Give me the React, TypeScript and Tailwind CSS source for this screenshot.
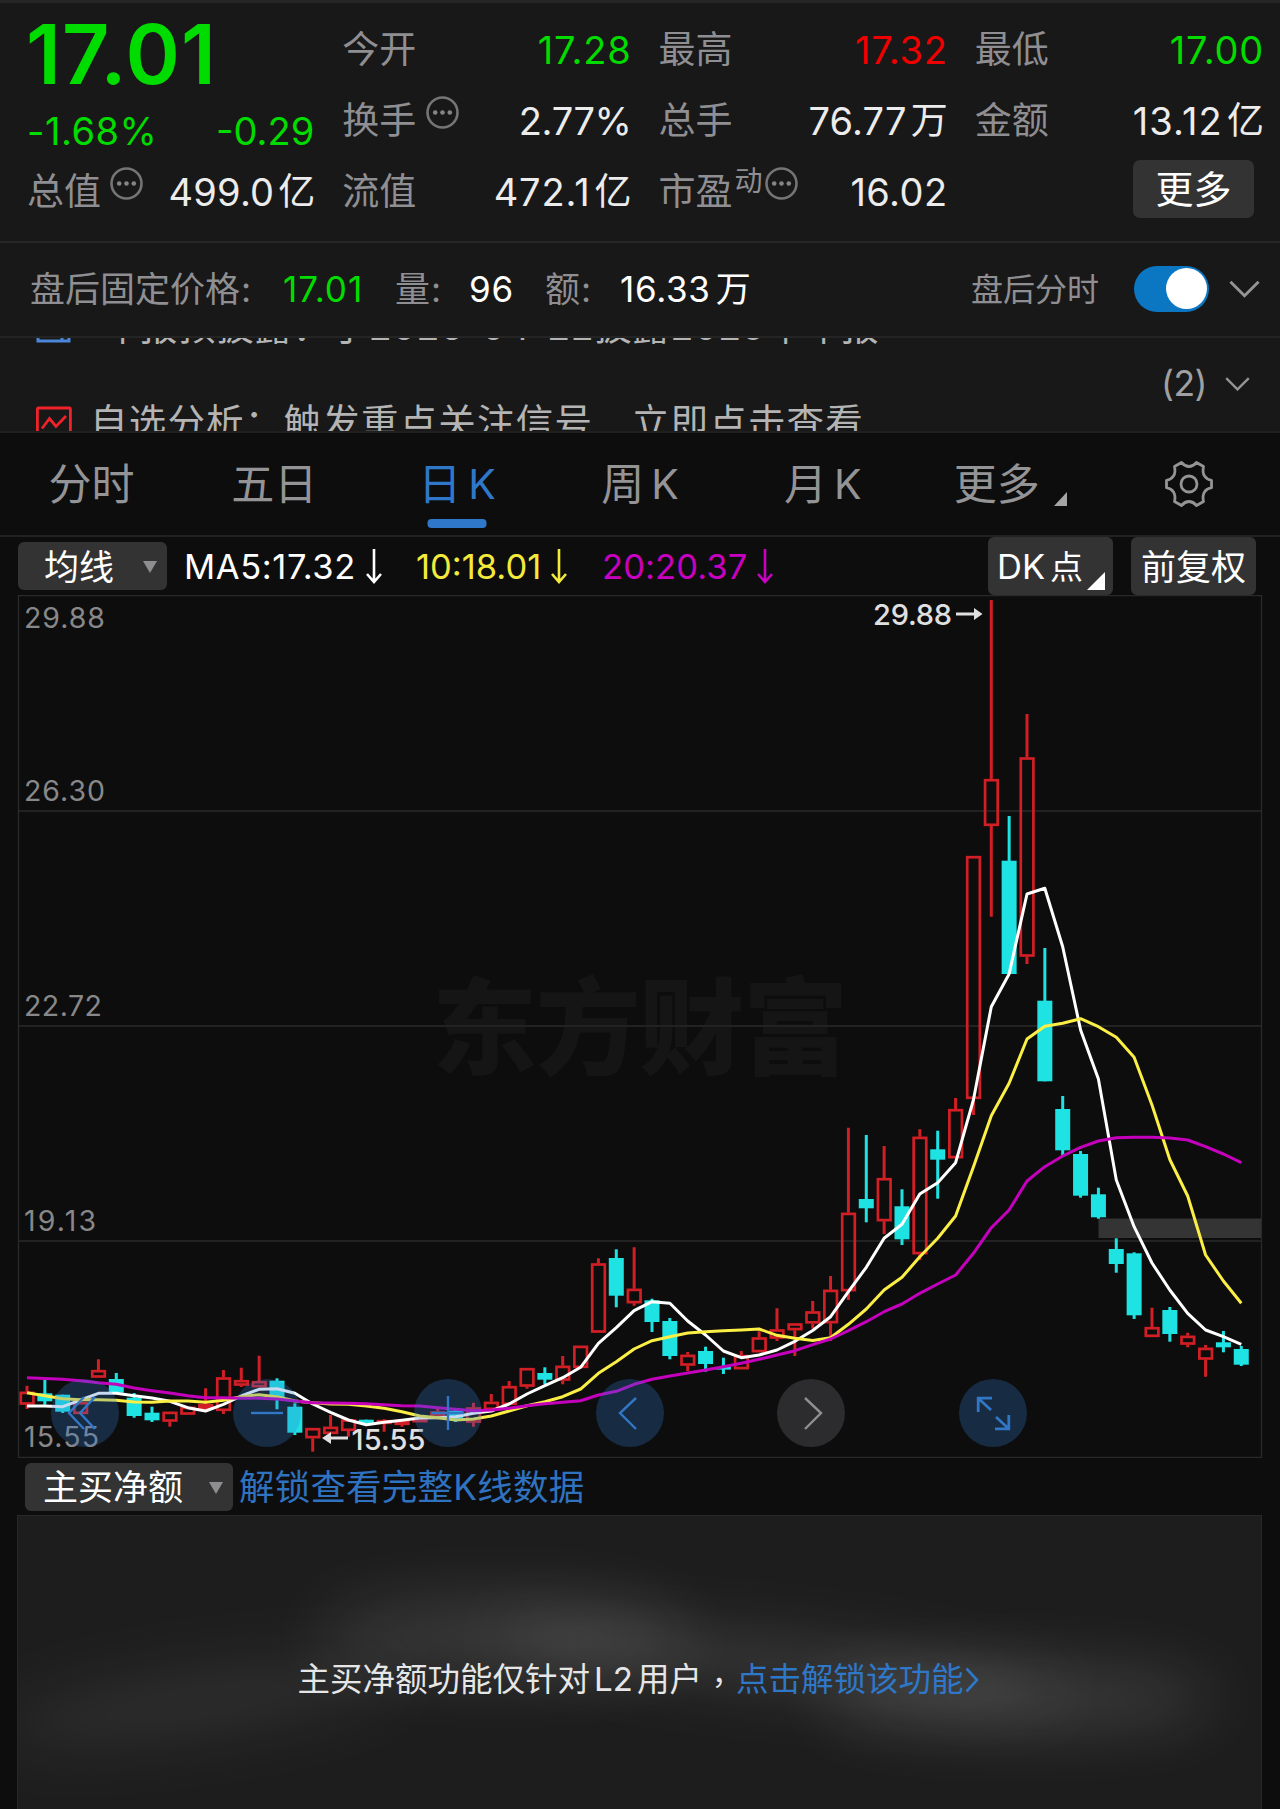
import type { ReactNode } from "react";

/* ---------- chart data (pixel space of the chart, origin at the page's left edge) ---------- */

type Candle = ["r" | "c", number, number, number, number]; // colour, high, body top, body bottom, low

const CANDLES: Candle[] = [
  ["r", 1385.7, 1391.7, 1404.7, 1409], ["c", 1380, 1393.3, 1401.3, 1404.7], ["c", 1394.7, 1394.7, 1411.7, 1413],
  ["r", 1401, 1402, 1414, 1414], ["r", 1359.3, 1370, 1377.7, 1377.7], ["c", 1373, 1379, 1392.7, 1392.7],
  ["c", 1393, 1397.7, 1416, 1417.7], ["c", 1406.7, 1412.7, 1420.3, 1422], ["r", 1411.7, 1411.7, 1421.7, 1426.7],
  ["r", 1406.7, 1406.7, 1414.7, 1414.7], ["r", 1388.3, 1404, 1409, 1410], ["r", 1370, 1377.3, 1411, 1414],
  ["r", 1367.7, 1380, 1385.7, 1387], ["r", 1355.7, 1381, 1387.3, 1387.3], ["c", 1378.3, 1380.7, 1398.3, 1409.3],
  ["c", 1403.3, 1406.7, 1432.7, 1435], ["r", 1428, 1428, 1438.3, 1451.7], ["r", 1415, 1426.7, 1434, 1434],
  ["r", 1419.3, 1419.3, 1431, 1436.7], ["c", 1419.7, 1419.7, 1423, 1423], ["r", 1419.3, 1420, 1424, 1431.7],
  ["r", 1419, 1420, 1425, 1426.7], ["r", 1418, 1418, 1422.3, 1422.3], ["r", 1409, 1411.3, 1416.3, 1416.3],
  ["c", 1408, 1410.7, 1420, 1422], ["r", 1402.7, 1407.3, 1422.7, 1426.7], ["r", 1394, 1401.7, 1410, 1410],
  ["r", 1381, 1386, 1405, 1405], ["r", 1368, 1368, 1386.7, 1388.7], ["c", 1367.3, 1373, 1379.7, 1384.3],
  ["r", 1356, 1365.7, 1380.7, 1384.3], ["r", 1345.7, 1345.7, 1368, 1368], ["r", 1258.3, 1263.3, 1332.7, 1332.7],
  ["c", 1249.3, 1258, 1295.7, 1307.3], ["r", 1247.3, 1288.7, 1303.3, 1305.7], ["c", 1298.7, 1300.3, 1322, 1332],
  ["c", 1318, 1321, 1356, 1359.3], ["r", 1352, 1354.7, 1365.7, 1371], ["c", 1346.7, 1351, 1364, 1371.7],
  ["c", 1357.7, 1367, 1369.6, 1374], ["r", 1351, 1355, 1369.3, 1369.3], ["r", 1331.3, 1337.3, 1352.3, 1352.3],
  ["r", 1308.3, 1329.3, 1338.7, 1341], ["r", 1323.3, 1323.3, 1330.3, 1356], ["r", 1301, 1311.3, 1323.5, 1328.5],
  ["r", 1276, 1289.7, 1323.3, 1341], ["r", 1127.7, 1212.7, 1291.3, 1300], ["c", 1135, 1199, 1208.3, 1222.3],
  ["r", 1146, 1178, 1221.3, 1234], ["c", 1189.3, 1206.3, 1239.3, 1245], ["r", 1129.3, 1136.7, 1254.3, 1260],
  ["c", 1130.7, 1149.3, 1159.7, 1198.7], ["r", 1098, 1109, 1158.3, 1158.3], ["r", 856, 856, 1099, 1115],
  ["r", 600, 779, 826, 916.7], ["c", 816, 860.7, 974, 974], ["r", 714, 757.3, 956.7, 964],
  ["c", 948, 1000.7, 1081.3, 1081.3], ["c", 1096, 1109, 1150.3, 1156], ["c", 1151, 1154, 1195.7, 1197.7],
  ["c", 1187.7, 1194.3, 1217.3, 1218.7], ["c", 1238.3, 1249, 1264, 1272.7], ["c", 1252.3, 1253.3, 1315.3, 1319],
  ["r", 1307.7, 1327, 1337, 1337], ["c", 1307, 1310, 1334, 1341.7], ["r", 1332.7, 1335.7, 1344.7, 1347.3],
  ["r", 1345, 1347.7, 1359.7, 1376.7], ["c", 1331, 1342.3, 1347.3, 1352.3], ["c", 1346, 1349, 1364.7, 1366],
];

const MA5 = [
  1406, 1406, 1406.7, 1400, 1393.3, 1393.3, 1395.7, 1398, 1401.3, 1407.7, 1411, 1404.3, 1396, 1389.3, 1388.7, 1393.3,
  1404, 1412.3, 1420, 1424.7, 1422.3, 1420.3, 1418, 1417.7, 1416.7, 1413.3, 1411, 1404, 1394, 1385.7, 1377.7, 1367.3,
  1343.3, 1327.7, 1310.7, 1301.7, 1303.3, 1321, 1335, 1351, 1357.7, 1355, 1350, 1341.3, 1330.5, 1316.7, 1291.7,
  1267.3, 1238.3, 1224.3, 1194, 1182.7, 1162.7, 1100, 1006.7, 974, 894, 888.3, 946.7, 1030, 1079, 1180, 1226.7, 1263,
  1290, 1313.3, 1330, 1336.7, 1344.3,
];

const MA10 = [
  1392.7, 1395.7, 1398.7, 1399.7, 1399.7, 1400.3, 1402, 1402.3, 1401, 1401, 1402.3, 1400.3, 1396.7, 1394.7, 1396.7,
  1401, 1402.7, 1404, 1404.3, 1406, 1408.3, 1411.7, 1416, 1417.7, 1420, 1419, 1416, 1411, 1405.7, 1401.7, 1396.7, 1389,
  1373.3, 1361.7, 1349, 1340.7, 1336.7, 1333, 1331.7, 1330.7, 1330, 1329, 1335.3, 1338.3, 1340.5, 1337.7, 1324.3, 1309,
  1290, 1277.3, 1256.7, 1238.3, 1216, 1167, 1115.7, 1083.3, 1039, 1026.3, 1023.3, 1018.7, 1026.7, 1037.3, 1057.3,
  1105, 1159.5, 1196, 1255, 1281, 1303.3,
];

const MA20 = [
  1377.7, 1378.5, 1379.3, 1380.7, 1382.7, 1384.3, 1388, 1390.7, 1393, 1395.7, 1397.7, 1397.7, 1398.3, 1398.3, 1399,
  1401, 1402.7, 1403, 1403.3, 1403.7, 1404.7, 1405.7, 1406, 1407.7, 1409.3, 1410.7, 1410, 1408.3, 1405.7, 1403.7,
  1402.3, 1400.7, 1395, 1391.3, 1384.3, 1379.3, 1376, 1373, 1370, 1366.7, 1363.3, 1359.3, 1355, 1350.7, 1344.7, 1339,
  1330.7, 1321.7, 1311.7, 1304, 1293.3, 1284, 1275, 1253.3, 1227.7, 1210, 1181, 1166.7, 1156, 1147.3, 1141, 1137.7,
  1137.3, 1137.3, 1138, 1140, 1146.7, 1154, 1162.7,
];

const cx = (i: number) => 27 + i * 17.857;
const line = (ys: number[]) => ys.map((y, i) => `${cx(i).toFixed(1)},${y}`).join(" ");

/* ---------- small pieces ---------- */

function MoreDots({ className = "" }: { className?: string }) {
  return (
    <svg className={`size-[33px] shrink-0 ${className}`} viewBox="0 0 33 33" fill="none">
      <circle cx="16.5" cy="16.5" r="15" stroke="#757577" strokeWidth="2.6" />
      <circle cx="9.2" cy="16.5" r="2.3" fill="#858587" />
      <circle cx="16.5" cy="16.5" r="2.3" fill="#858587" />
      <circle cx="23.8" cy="16.5" r="2.3" fill="#858587" />
    </svg>
  );
}

function Chevron({ className }: { className: string }) {
  return (
    <svg className={className} viewBox="0 0 32 18" fill="none">
      <path d="M1.5 1.5 16 16 30.5 1.5" stroke="#949496" strokeWidth="3" />
    </svg>
  );
}

type StatProps = { label: ReactNode; value?: ReactNode; color?: string; tracking?: string };

function Stat({ label, value, color = "text-[#ececec]", tracking = "tracking-[0.2px]" }: StatProps) {
  return (
    <div className="-mr-[2px] -ml-px flex h-[71px] items-center justify-between">
      <span className="flex items-center text-[37px] text-[#8f8f93]">{label}</span>
      <span className={`flex items-center text-[38px] ${tracking} ${color}`}>{value}</span>
    </div>
  );
}

function Unit({ children }: { children: ReactNode }) {
  return <span className="ml-[4px] text-[37px] tracking-normal">{children}</span>;
}

function Header() {
  return (
    <section className="grid h-[241px] grid-cols-4 gap-x-[30px] border-t-[3px] border-[#252525] bg-[#181818] pr-[18px] pl-[27px]">
      <div className="pt-[11px]">
        <div className="-ml-px flex h-[80px] items-center text-[82.5px] font-semibold tracking-[1.1px] text-[#00dc00]">17.01</div>
        <div className="-mr-px flex h-[74px] items-center justify-between text-[38px] text-[#00dc00]">
          <span className="tracking-[0.5px]">-1.68%</span>
          <span>-0.29</span>
        </div>
        <div className="-mt-[12px] ml-px">
          <Stat label={<>总值<MoreDots className="mb-[16px] ml-[9px]" /></>} value={<>499.0<Unit>亿</Unit></>} />
        </div>
      </div>
      <div className="pt-[11px]">
        <Stat label="今开" value="17.28" color="text-[#00dc00]" tracking="tracking-[0.8px]" />
        <Stat label={<>换手<MoreDots className="mb-[16px] ml-[10px]" /></>} value="2.77%" tracking="tracking-[-0.4px]" />
        <Stat label="流值" value={<>472.1<Unit>亿</Unit></>} tracking="tracking-[0.9px]" />
      </div>
      <div className="pt-[11px]">
        <Stat label="最高" value="17.32" color="text-[#ee0000]" tracking="tracking-[0.8px]" />
        <Stat label="总手" value={<>76.77<Unit>万</Unit></>} />
        <Stat
          label={<>市盈<span className="mb-[22px] ml-[2px] text-[28px]">动</span><MoreDots className="mb-[16px] ml-[2px]" /></>}
          value="16.02"
          tracking="tracking-[0.5px]"
        />
      </div>
      <div className="pt-[11px]">
        <Stat label="最低" value="17.00" color="text-[#00dc00]" tracking="tracking-[0.8px]" />
        <Stat label="金额" value={<>13.12<Unit>亿</Unit></>} tracking="tracking-[1.2px]" />
        <div className="mt-[4px] mr-[8px] ml-auto flex h-[58px] w-[121px] items-center justify-center rounded-[7px] bg-[#333333] text-[38px] text-white">
          更多
        </div>
      </div>
    </section>
  );
}

function AfterHours() {
  return (
    <section className="flex h-[95px] items-center border-t-2 border-[#262626] bg-[#181818] pl-[30px] text-[35px] text-white">
      <span className="w-[253px] text-[#8f8f93]">盘后固定价格<span className="ml-px">:</span></span>
      <span className="w-[112px] tracking-[1px] text-[#00dc00]">17.01</span>
      <span className="w-[74px] text-[#8f8f93]">量<span className="ml-px">:</span></span>
      <span className="w-[76px] tracking-[0.9px]">96</span>
      <span className="w-[75px] text-[#8f8f93]">额<span className="ml-px">:</span></span>
      <span className="tracking-[0.7px]">16.33<span className="ml-[5px]">万</span></span>
      <span className="ml-auto text-[32px] text-[#8f8f93]">盘后分时</span>
      <span className="mb-[2px] ml-[35px] flex h-[46px] w-[75px] items-center justify-end rounded-full bg-[#0b77c3] pr-[2px]">
        <span className="size-[41px] rounded-full bg-white" />
      </span>
      <Chevron className="mr-[20px] mb-[2px] ml-[20px] h-[18px] w-[31px]" />
    </section>
  );
}

function NewsTicker() {
  return (
    <section className="flex h-[95px] items-center justify-between overflow-hidden border-t-2 border-[#242424] bg-[#181818] pr-[30px] pl-[36px]">
      <div className="-mt-[22px] text-[37.5px] whitespace-pre text-[#b4b4b4]">
        <div className="flex h-[96px] items-center">
          <svg className="mt-[3px] mr-[30px] h-[34px] w-[36px]" viewBox="0 0 36 34" fill="none" stroke="#4c86d8" strokeWidth="3">
            <rect x="2" y="2" width="31" height="29" />
            <path d="M8 24h18M26 20v10" />
          </svg>
          <span className="mt-[3px] tracking-[0.6px]">年报预披露：于2026-04-22披露2025年年报</span>
        </div>
        <div className="flex h-[96px] items-center">
          <svg className="mt-[2px] mr-[18px] h-[36px] w-[36px]" viewBox="0 0 36 36" fill="none" stroke="#f0222a" strokeWidth="2.8">
            <rect x="1.4" y="3" width="33" height="31" rx="1" />
            <path d="M6 23.500 13.500 13.500 20 21.500 30 11" />
          </svg>
          <span className="mt-[2px] tracking-[1.2px]">自选分析：触发重点关注信号　立即点击查看</span>
        </div>
      </div>
      <div className="mb-[2px] flex items-center text-[#a0a0a2]">
        <span className="text-[35.5px] tracking-[-0.5px]">(2)</span>
        <Chevron className="ml-[18px] h-[14px] w-[25px]" />
      </div>
    </section>
  );
}

function GearIcon() {
  return (
    <svg className="h-[48px] w-[50px]" viewBox="0 0 50 48" fill="none" stroke="#949496" strokeWidth="2.8" strokeLinejoin="round">
      <path d="M17.500 2.500Q21 6.500 25 6.500T32.500 2.500L39.500 6.500Q38.200 12.500 40.500 16T47.500 20.300V27.700Q42.800 28.500 40.500 32T39.500 41.500L32.500 45.500Q29 41.500 25 41.500T17.500 45.500L10.500 41.500Q11.800 35.500 9.500 32T2.500 27.700V20.300Q7.200 19.500 9.500 16T10.500 6.500Z" />
      <circle cx="25" cy="24" r="8" />
    </svg>
  );
}

function Tab({ children, active = false }: { children: ReactNode; active?: boolean }) {
  return (
    <div className={`relative flex items-center justify-center text-[43px] ${active ? "text-[#2f77c8]" : "text-[#949496]"}`}>
      {children}
      {active && <span className="absolute bottom-[7px] left-1/2 h-[9px] w-[59px] -translate-x-1/2 rounded-[4px] bg-[#2f77c8]" />}
    </div>
  );
}

function Latin({ children }: { children: ReactNode }) {
  return <span className="ml-[7px] text-[41px]">{children}</span>;
}

function Tabs() {
  return (
    <nav className="grid h-[104px] grid-cols-7 border-t-2 border-[#1f1f1f]">
      <Tab>分时</Tab>
      <Tab>五日</Tab>
      <Tab active>日<Latin>K</Latin></Tab>
      <Tab>周<Latin>K</Latin></Tab>
      <Tab>月<Latin>K</Latin></Tab>
      <Tab>
        <span className="ml-[9px]">更多</span>
        <svg className="mt-[30px] ml-[14px] h-[14px] w-[13px]" viewBox="0 0 13 14"><path d="M13 0V14H0Z" fill="#a5a5a5" /></svg>
      </Tab>
      <Tab><GearIcon /></Tab>
    </nav>
  );
}

function Dropdown({ className, children }: { className: string; children: ReactNode }) {
  return (
    <div className={`flex items-center justify-between rounded-[6px] bg-[#333333] pr-[10px] text-white ${className}`}>
      {children}
      <svg className="h-[12px] w-[14px]" viewBox="0 0 14 12"><path d="M0 0H14L7 12Z" fill="#8e8e90" /></svg>
    </div>
  );
}

function Average({ className, children }: { className: string; children: ReactNode }) {
  return (
    <span className={`flex items-center pt-[2px] text-[34.5px] ${className}`}>
      {children}
      <svg className="-mt-[2px] ml-[10px] h-[36px] w-[16px]" viewBox="0 0 16 36" fill="none" stroke="currentColor" strokeWidth="2.6">
        <path d="M8 1V34M1 26 8 34 15 26" />
      </svg>
    </span>
  );
}

function IndicatorBar() {
  return (
    <section className="flex h-[60px] items-center border-t-2 border-[#222222] pl-[18px] whitespace-nowrap">
      <Dropdown className="h-[48px] w-[149px] pt-[2px] pl-[26px] text-[35px]">均线</Dropdown>
      <Average className="ml-[17px] w-[232px] tracking-[0.6px] text-white">MA5:17.32</Average>
      <Average className="w-[186px] text-[#f4ea3c]">10:18.01</Average>
      <Average className="tracking-[0.1px] text-[#c800c0]">20:20.37</Average>
      <div className="relative mr-[18px] ml-auto flex h-[58px] w-[125px] items-center rounded-[6px] bg-[#333333] pt-[2px] pl-[9px] text-[34.5px] text-white">
        DK<span className="ml-[5px] text-[33px]">点</span>
        <svg className="absolute right-[8px] bottom-[5px] h-[18px] w-[18px]" viewBox="0 0 18 18"><path d="M18 0V18H0Z" fill="#fff" /></svg>
      </div>
      <div className="mr-[24px] flex h-[58px] w-[125px] items-center justify-center rounded-[6px] bg-[#333333] pt-[2px] text-[35px] text-white">
        前复权
      </div>
    </section>
  );
}

function ChartButton({ muted = false, children }: { muted?: boolean; children: ReactNode }) {
  return (
    <div className={`flex size-[68px] items-center justify-center rounded-full ${muted ? "bg-[#2c2c2e]" : "bg-[#327ad0]/28"}`}>
      <svg className={`size-[40px] ${muted ? "text-[#8f8f91]" : "text-[#3276c6]"}`} viewBox="0 0 40 40" fill="none" stroke="currentColor" strokeWidth="2.4">
        {children}
      </svg>
    </div>
  );
}

function KLineChart() {
  return (
    <section className="relative h-[863px]">
      <svg className="block h-[863px] w-[1280px]" viewBox="0 595 1280 863" fontFamily="Inter, sans-serif">
        <text x="432" y="1066" fontSize="105" fontWeight="900" textLength="416" fontFamily="'Noto Sans CJK SC', sans-serif" fill="#151515">
          东方财富
        </text>
        <g stroke="#222222" strokeWidth="2">
          <path d="M18 811H1261M18 1026H1261M18 1241H1261" />
          <path d="M18.500 595.500H1261.500V1457.500H18.500Z" stroke="#292929" strokeWidth="1.300" fill="none" />
        </g>
        <rect x="1098.500" y="1218.500" width="162.500" height="19.500" fill="#343434" />
        <g fill="#88888a" fontSize="28.500">
          <text x="24" y="627.500" textLength="81">29.88</text>
          <text x="24" y="801" textLength="81">26.30</text>
          <text x="24" y="1016" textLength="78">22.72</text>
          <text x="24" y="1231" textLength="72">19.13</text>
          <text x="24" y="1446.500" textLength="75">15.55</text>
        </g>
        {CANDLES.map(([kind, high, top, bottom, low], i) => {
          const x = cx(i);
          return kind === "c" ? (
            <g key={i} fill="#1fe3e3">
              <rect x={x - 1.5} y={high} width="3" height={low - high} />
              <rect x={x - 7.5} y={top} width="15" height={bottom - top} />
            </g>
          ) : (
            <g key={i} stroke="#d21f26" strokeWidth="2.7" fill="none">
              <path d={`M${x} ${high}V${top}M${x} ${bottom}V${low}`} strokeWidth="3" />
              <rect x={x - 6.2} y={top + 1.2} width="12.6" height={Math.max(bottom - top - 2.4, 1)} />
            </g>
          );
        })}
        <g fill="none" strokeWidth="3" strokeLinejoin="round">
          <polyline points={line(MA5)} stroke="#ffffff" />
          <polyline points={line(MA10)} stroke="#fbee45" />
          <polyline points={line(MA20)} stroke="#c400bd" />
        </g>
        <g fill="#e0e0e0" stroke="none" fontSize="29" fontWeight="500">
          <text x="873" y="625" textLength="79">29.88</text>
          <path d="M956 612.500H974V608L982.500 614L974 620V615.500H956Z" />
          <text x="351.500" y="1449.500" textLength="74">15.55</text>
          <path d="M348 1436.500H331V1432L322 1438L331 1444V1439.500H348Z" />
        </g>
      </svg>
      <div className="absolute top-[784px] left-[51px] flex w-[976px] justify-between">
        <ChartButton><path d="M19 4 4 20 19 36M30 4 15 20 30 36" /></ChartButton>
        <ChartButton><path d="M4 20H36" /></ChartButton>
        <ChartButton><path d="M4 20H36M20 3V37" /></ChartButton>
        <ChartButton><path d="M26 5 10 20 26 36" /></ChartButton>
        <ChartButton muted><path d="M14 5 30 20 14 36" /></ChartButton>
        <ChartButton>
          <path d="M19 5.200H5.200V19M5.200 5.200 18 17M35.800 22V35.800H22M35.800 35.800 23 24" strokeWidth="2.800" />
        </ChartButton>
      </div>
    </section>
  );
}

function SubIndicatorBar() {
  return (
    <section className="flex h-[57px] items-center pl-[25px]">
      <Dropdown className="h-[48px] w-[208px] pt-[2px] pl-[18px] text-[35px]">主买净额</Dropdown>
      <span className="mt-[2px] ml-[6px] text-[35.500px] tracking-[0.2px] text-[#2f72c0]">解锁查看完整K线数据</span>
    </section>
  );
}

function LockedPanel() {
  return (
    <section className="relative ml-[17px] flex h-[294px] w-[1245px] justify-center overflow-hidden border border-b-0 border-[#272727] bg-[#1d1d1d]">
      <div className="absolute top-[86px] left-[300px] h-[70px] w-[370px] rounded-[50%] bg-white/14 blur-[34px]" />
      <div className="absolute top-[122px] left-[480px] h-[50px] w-[560px] rotate-[6deg] rounded-[50%] bg-white/12 blur-[28px]" />
      <div className="absolute top-[150px] left-[800px] h-[64px] w-[400px] rounded-[50%] bg-white/14 blur-[32px]" />
      <div className="absolute top-[156px] left-[-20px] h-[60px] w-[400px] rotate-[-8deg] rounded-[50%] bg-white/8 blur-[30px]" />
      <div className="relative mt-[140px] flex h-[48px] items-center text-[32.500px] text-[#e6e6e6]">
        <span>主买净额功能仅针对<span className="mx-[4px] text-[33px]">L2</span>用户</span>
        <span className="mx-[2px] font-['Noto_Sans_CJK_TC',sans-serif] text-[30px]" lang="zh-TW">，</span>
        <span className="text-[#2f77c8]">点击解锁该功能</span>
        <svg className="mr-[2px] ml-[2px] h-[26px] w-[14px]" viewBox="0 0 14 26" fill="none"><path d="M1.500 1.500 12 13 1.500 24.500" stroke="#2f77c8" strokeWidth="2.600" /></svg>
      </div>
    </section>
  );
}

export default function App() {
  return (
    <main className="h-[1809px] w-[1280px] overflow-hidden bg-[#0d0d0d] font-[Inter,'Noto_Sans_CJK_SC',sans-serif] leading-none">
      <Header />
      <AfterHours />
      <NewsTicker />
      <Tabs />
      <IndicatorBar />
      <KLineChart />
      <SubIndicatorBar />
      <LockedPanel />
    </main>
  );
}
